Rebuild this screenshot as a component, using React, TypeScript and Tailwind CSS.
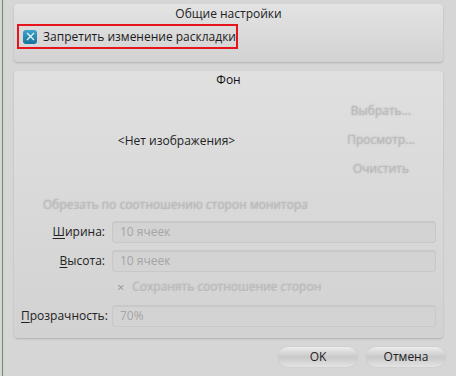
import React from "react";

const font = { fontFamily: '"Open Sans", "DejaVu Sans", sans-serif' };

const disabled =
  "text-[#bdbdbd] [text-shadow:0_0_2px_#a8a8a8,1px_1px_0_#e4e4e4]";

const Field = ({ label, u, value }: { label: string; u: string; value: string }) => (
  <div className="flex items-center h-[26px] mt-[3px]">
    <div className="w-[91px] text-right pr-[7px] text-[#222]">
      <span className="underline underline-offset-2">{u}</span>
      {label}
    </div>
    <div className="flex-1 h-[22px] rounded-[3px] border border-[#c8c8c8] bg-[#d3d3d3] shadow-[inset_0_1px_1px_rgba(0,0,0,0.05)] flex items-center pl-[7px] text-[#a5a5a5]">
      {value}
    </div>
  </div>
);

const Btn = ({ children }: { children: React.ReactNode }) => (
  <div className="w-[80px] h-[20px] rounded-[10px] bg-gradient-to-b from-[#ececec] via-[#c9c9c9] to-[#e3e3e3] flex items-center justify-center text-[#222] shadow-[0_0_1px_rgba(0,0,0,0.2)]">
    {children}
  </div>
);

export default function App() {
  return (
    <div
      style={font}
      className="w-[456px] h-[376px] bg-[#d6d6d6] text-[12px] leading-none relative overflow-hidden whitespace-nowrap"
    >
      <div className="absolute left-[2px] top-0 bottom-0 w-[1px] bg-[#6f8a6a]" />
      <div className="flex flex-col pl-[14px] pr-[13px] pt-[4px] h-full">
        <div className="h-[58px] rounded-[4px] bg-gradient-to-b from-[#e3e3e3] to-[#d2d2d2] shadow-[0_1px_2px_rgba(0,0,0,0.18)] flex flex-col">
          <div className="text-center pt-[4px] h-[20px] text-[#222]">Общие настройки</div>
          <div className="ml-[3px] w-[221px] h-[25px] border-2 border-[#e8141b] flex items-center pl-[4px] gap-[6px]">
            <div className="w-[15px] h-[14px] rounded-[3px] bg-gradient-to-b from-[#3ea3c9] to-[#17739b] flex items-center justify-center">
              <svg width="9" height="9" viewBox="0 0 9 9">
                <path d="M1 1L8 8M8 1L1 8" stroke="#e8f4fa" strokeWidth="1.3" />
              </svg>
            </div>
            <span className="text-[#1a1a1a]">Запретить изменение раскладки</span>
          </div>
        </div>

        <div className="mt-[9px] h-[267px] rounded-[4px] bg-gradient-to-b from-[#e0e0e0] to-[#d2d2d2] shadow-[0_1px_2px_rgba(0,0,0,0.18)] flex flex-col px-[7px]">
          <div className="text-center pt-[3px] h-[18px] text-[#111]">Фон</div>
          <div className="flex h-[110px]">
            <div className="flex-1 flex items-center justify-center pr-[4px] pb-[6px] text-[#222]">
              &lt;Нет изображения&gt;
            </div>
            <div className={`w-[90px] mr-[10px] flex flex-col items-center pt-[16px] gap-[17px] ${disabled}`}>
              <span>Выбрать...</span>
              <span>Просмотр...</span>
              <span>Очистить</span>
            </div>
          </div>
          <div className={`pl-[22px] h-[17px] ${disabled}`}>
            Обрезать по соотношению сторон монитора
          </div>
          <Field u="Ш" label="ирина:" value="10 ячеек" />
          <Field u="В" label="ысота:" value="10 ячеек" />
          <div className="flex items-center h-[26px] pl-[96px] gap-[8px]">
            <span className="text-[#9a9a9a] text-[13px]">×</span>
            <span className={disabled}>Сохранять соотношение сторон</span>
          </div>
          <Field u="П" label="розрачность:" value="70%" />
        </div>

        <div className="flex justify-end gap-[8px] mt-[9px] -mr-[3px]">
          <Btn>OK</Btn>
          <Btn>Отмена</Btn>
        </div>
      </div>
    </div>
  );
}
